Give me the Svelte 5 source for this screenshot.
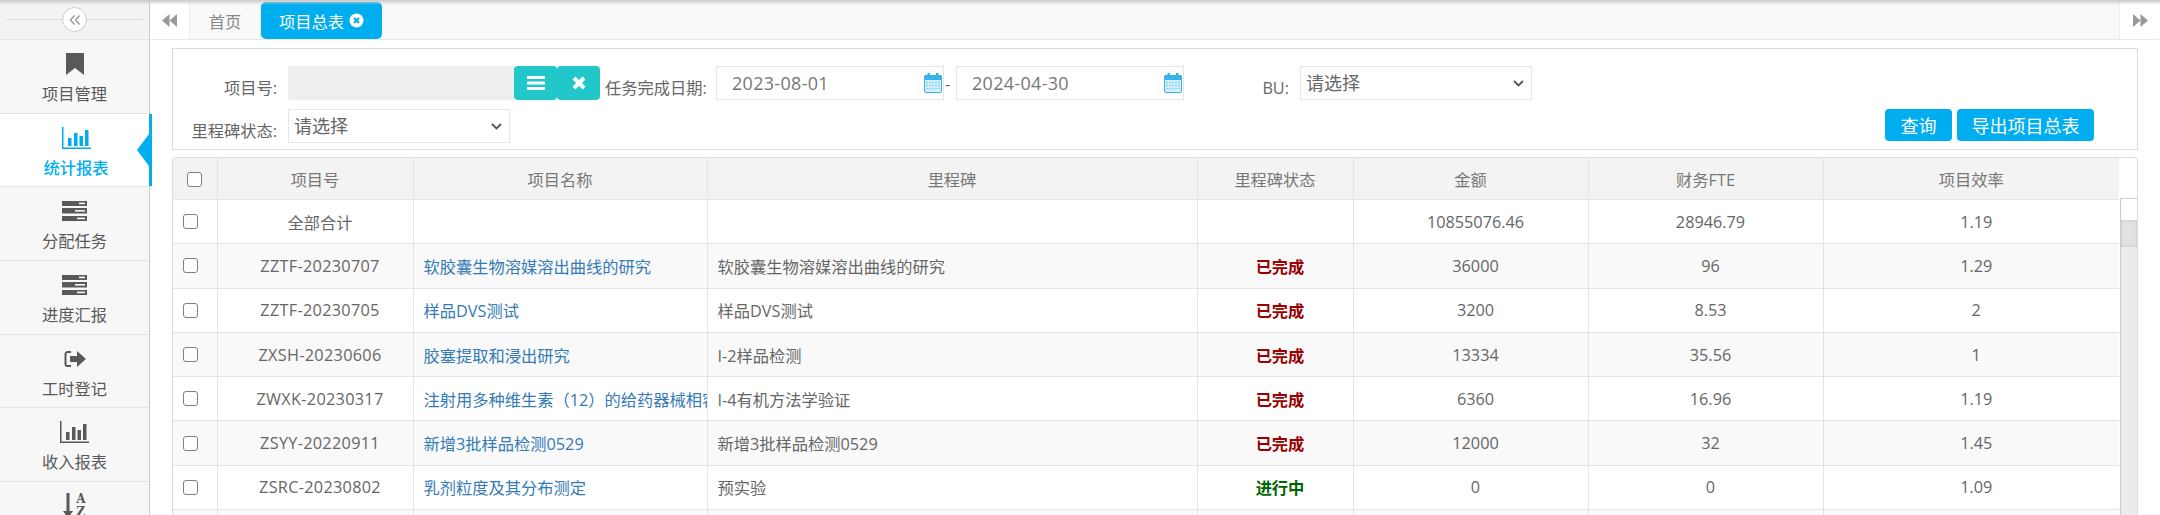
<script>
	const menu = [
		{ label: '项目管理', icon: 'bookmark' },
		{ label: '统计报表', icon: 'chart', active: true },
		{ label: '分配任务', icon: 'tasks' },
		{ label: '进度汇报', icon: 'tasks' },
		{ label: '工时登记', icon: 'signout' },
		{ label: '收入报表', icon: 'chart' },
		{ label: '', icon: 'sort' }
	];

	const columns = ['项目号', '项目名称', '里程碑', '里程碑状态', '金额', '财务FTE', '项目效率'];

	const rows = [
		{ no: '全部合计', name: '', stone: '', status: '', amount: '10855076.46', fte: '28946.79', rate: '1.19' },
		{ no: 'ZZTF-20230707', name: '软胶囊生物溶媒溶出曲线的研究', stone: '软胶囊生物溶媒溶出曲线的研究', status: '已完成', amount: '36000', fte: '96', rate: '1.29' },
		{ no: 'ZZTF-20230705', name: '样品DVS测试', stone: '样品DVS测试', status: '已完成', amount: '3200', fte: '8.53', rate: '2' },
		{ no: 'ZXSH-20230606', name: '胶塞提取和浸出研究', stone: 'I-2样品检测', status: '已完成', amount: '13334', fte: '35.56', rate: '1' },
		{ no: 'ZWXK-20230317', name: '注射用多种维生素（12）的给药器械相容性研究', stone: 'I-4有机方法学验证', status: '已完成', amount: '6360', fte: '16.96', rate: '1.19' },
		{ no: 'ZSYY-20220911', name: '新增3批样品检测0529', stone: '新增3批样品检测0529', status: '已完成', amount: '12000', fte: '32', rate: '1.45' },
		{ no: 'ZSRC-20230802', name: '乳剂粒度及其分布测定', stone: '预实验', status: '进行中', amount: '0', fte: '0', rate: '1.09' },
		{ no: '', name: '', stone: '', status: '', amount: '', fte: '', rate: '' }
	];
</script>

{#snippet calendar()}
	<svg class="cal" width="18" height="20" viewBox="0 0 18 20">
		<rect x="0.5" y="2.5" width="17" height="17" rx="1.5" fill="#d9f0fb" stroke="#35b4ea" />
		<rect x="0" y="2" width="18" height="5" rx="1.5" fill="#35b4ea" />
		<rect x="3.500" y="0" width="2.500" height="4.500" fill="#35b4ea" />
		<rect x="12" y="0" width="2.500" height="4.500" fill="#35b4ea" />
		<path d="M2 9.500h14M2 12.500h14M2 15.500h14" stroke="#8fd3f4" stroke-width="1.500" stroke-dasharray="2 1" />
	</svg>
{/snippet}

{#snippet chevron()}
	<svg class="chev" width="11" height="7" viewBox="0 0 11 7"><path d="M1 1l4.5 4.5L10 1" fill="none" stroke="#555" stroke-width="1.8" /></svg>
{/snippet}

<div class="page">
	<div class="topshadow"></div>
	<aside class="side">
		<div class="collapse">
			<span class="circle">
				<svg width="12" height="12" viewBox="0 0 12 12"><path d="M5.5 1.5L1.5 6l4 4.5M10.5 1.5L6.5 6l4 4.5" fill="none" stroke="#999" stroke-width="1.4" /></svg>
			</span>
		</div>
		{#each menu as item}
			<div class="item" class:active={item.active}>
				<span class="ico">
					{#if item.icon === 'bookmark'}
						<svg width="18" height="22" viewBox="0 0 18 22"><path d="M0 0h18v22l-9-7-9 7z" fill="currentColor" /></svg>
					{:else if item.icon === 'chart'}
						<svg width="29" height="22" viewBox="0 0 29 22" fill="currentColor"><path d="M0 0h1.5v20.5H29V22H0z" /><rect x="6" y="11" width="3.5" height="8" /><rect x="12" y="6" width="3.5" height="13" /><rect x="17.5" y="9" width="3.5" height="10" /><rect x="23" y="3" width="3.5" height="16" /></svg>
					{:else if item.icon === 'tasks'}
						<svg width="25" height="20" viewBox="0 0 25 20" fill="currentColor"><path d="M0 0h25v5H0zM0 7h25v5.5H0zM0 15h25v5H0z" /><rect x="13" y="9" width="10" height="1.6" fill="#f7f7f7" /><rect x="15" y="16.6" width="8" height="1.6" fill="#f7f7f7" /><rect x="17" y="1.6" width="6" height="1.6" fill="#f7f7f7" /></svg>
					{:else if item.icon === 'signout'}
						<svg width="22" height="18" viewBox="0 0 22 18"><path d="M7 2H3.5A2 2 0 0 0 1.500 4v10a2 2 0 0 0 2 2H7" fill="none" stroke="currentColor" stroke-width="2" /><path d="M6 6h7V1l9 8-9 8v-5H6z" fill="currentColor" /></svg>
					{:else}
						<span class="sort">
							<svg width="10" height="25" viewBox="0 0 10 25"><path d="M3.500 0h3v18H10l-5 7-5-7h3.500z" fill="currentColor" /></svg>
							<span class="az"><b>A</b><b>Z</b></span>
						</span>
					{/if}
				</span>
				{#if item.label}<span class="lbl">{item.label}</span>{/if}
				{#if item.active}<span class="arrow"></span>{/if}
			</div>
		{/each}
	</aside>

	<main class="main">
		<nav class="tabs">
			<span class="nav-btn">
				<svg width="15" height="13" viewBox="0 0 15 13"><path d="M7.500 0v13L0 6.500zM15 0v13L7.500 6.500z" fill="#999" /></svg>
			</span>
			<span class="tab">首页</span>
			<span class="tab current">项目总表
				<svg width="15" height="15" viewBox="0 0 15 15"><circle cx="7.500" cy="7.500" r="7" fill="#fff" /><path d="M5 5l5 5M10 5l-5 5" stroke="#00aeef" stroke-width="2" /></svg>
			</span>
			<span class="grow"></span>
			<span class="nav-btn end">
				<svg width="15" height="13" viewBox="0 0 15 13"><path d="M0 0v13l7.500-6.500zM7.500 0v13L15 6.500z" fill="#999" /></svg>
			</span>
		</nav>

		<div class="content">
			<section class="filter">
				<div class="frow">
					<label class="flabel" for="pno">项目号:</label>
					<input id="pno" class="pno" disabled />
					<span class="btns">
						<button class="teal" aria-label="选择">
							<svg width="18" height="14" viewBox="0 0 18 14" fill="#fff"><rect width="18" height="3" rx="0.5" /><rect y="5.500" width="18" height="3" rx="0.5" /><rect y="11" width="18" height="3" rx="0.5" /></svg>
						</button>
						<button class="teal" aria-label="清除">
							<svg width="14" height="14" viewBox="0 0 14 14"><path d="M2 2l10 10M12 2L2 12" stroke="#fff" stroke-width="4" /></svg>
						</button>
					</span>
					<span class="dlabel">任务完成日期:</span>
					<div class="date">2023-08-01{@render calendar()}</div>
					<span class="dash">-</span>
					<div class="date">2024-04-30{@render calendar()}</div>
					<span class="bu">BU:</span>
					<div class="sel">请选择{@render chevron()}</div>
				</div>
				<div class="frow second">
					<span class="flabel">里程碑状态:</span>
					<div class="sel">请选择{@render chevron()}</div>
					<span class="grow"></span>
					<button class="blue query">查询</button>
					<button class="blue export">导出项目总表</button>
				</div>
			</section>

			<section class="grid">
				<div class="tablewrap">
					<table>
						<colgroup>
							<col style="width:44px" />
							<col style="width:196px" />
							<col style="width:294px" />
							<col style="width:490px" />
							<col style="width:156px" />
							<col style="width:235px" />
							<col style="width:235px" />
							<col style="width:296px" />
						</colgroup>
						<thead>
							<tr>
								<th><input type="checkbox" class="chk head" /></th>
								{#each columns as c}<th>{c}</th>{/each}
							</tr>
						</thead>
						<tbody>
							{#each rows as r, i}
								<tr class:odd={i % 2 === 1}>
									<td class="first"><input type="checkbox" class="chk" /></td>
									<td class="c" class:code={i > 0}>{r.no}</td>
									<td class="l"><a href="#top">{r.name}</a></td>
									<td class="l">{r.stone}</td>
									<td class="c status" class:done={r.status === '已完成'} class:doing={r.status === '进行中'}>{r.status}</td>
									<td class="c">{r.amount}</td>
									<td class="c">{r.fte}</td>
									<td class="c">{r.rate}</td>
								</tr>
							{/each}
						</tbody>
					</table>
				</div>
				<div class="scrollbar">
					<div class="sb-up"></div>
					<div class="sb-thumb"></div>
				</div>
			</section>
		</div>
	</main>
</div>

<style>
	:global(body) {
		margin: 0;
		background: #fff;
		overflow: hidden;
	}

	.page {
		position: relative;
		display: flex;
		height: 515px;
		overflow: hidden;
		font-family: 'Open Sans', 'Noto Sans CJK SC', sans-serif;
		font-size: 16.25px;
		color: #666;
	}

	.topshadow {
		position: absolute;
		left: 0;
		right: 0;
		top: 0;
		height: 5px;
		background: linear-gradient(#c8c8c8, rgba(255, 255, 255, 0));
		z-index: 3;
	}

	.grow {
		flex: 1;
	}

	/* side menu */
	.side {
		width: 149px;
		flex: none;
		background: #f7f7f7;
		border-right: 1px solid #ccc;
	}

	.collapse {
		height: 39px;
		display: flex;
		align-items: center;
		justify-content: center;
		background: linear-gradient(90deg, transparent 6px, #ddd 6px, #ddd 143px, transparent 143px) center / 100% 1px no-repeat #f3f3f3;
		border-bottom: 1px solid #e4e4e4;
	}

	.circle {
		width: 23px;
		height: 23px;
		border: 1px solid #ccc;
		border-radius: 50%;
		background: #fff;
		display: flex;
		align-items: center;
		justify-content: center;
	}

	.item {
		position: relative;
		height: 72.7px;
		border-bottom: 1px solid #e4e4e4;
		display: flex;
		flex-direction: column;
		align-items: center;
		color: #595959;
	}

	.ico {
		height: 34px;
		margin-top: 7px;
		display: flex;
		align-items: center;
		justify-content: center;
		flex: none;
	}

	.lbl {
		line-height: 24px;
		margin-top: 1px;
	}

	.item.active {
		background: #fff;
		color: #00aeef;
		font-weight: 500;
		width: 152px;
		box-sizing: content-box;
		z-index: 1;
	}

	.item.active::after {
		content: '';
		position: absolute;
		right: 0;
		top: 0;
		bottom: 0;
		width: 3px;
		background: #00aeef;
	}

	.arrow {
		position: absolute;
		right: 3px;
		top: 20px;
		border: 16px solid transparent;
		border-left: 0;
		border-right: 12px solid #00aeef;
	}

	.sort {
		display: flex;
		gap: 3px;
		color: #595959;
	}

	.az {
		display: flex;
		flex-direction: column;
		font-family: 'DejaVu Serif', serif;
		font-size: 12px;
		line-height: 13px;
	}

	/* tabs */
	.main {
		flex: 1;
		min-width: 0;
		display: flex;
		flex-direction: column;
	}

	.tabs {
		height: 37px;
		flex: none;
		margin-top: 2px;
		margin-bottom: 2px;
		display: flex;
		align-items: stretch;
		background: #f9f9f9;
		box-shadow: 0 2px 0 -1px #e8e8e8;
	}

	.nav-btn {
		width: 39px;
		flex: none;
		background: #fff;
		border-right: 1px solid #eee;
		display: flex;
		align-items: center;
		justify-content: center;
	}

	.nav-btn.end {
		width: 40px;
		border-right: 0;
		border-left: 1px solid #eee;
	}

	.tab {
		width: 70px;
		display: flex;
		align-items: center;
		justify-content: center;
		gap: 5px;
		color: #888;
		border-right: 1px solid #e8e8e8;
	}

	.tab.current {
		width: 121px;
		background: #00aeef;
		color: #fff;
		border-right: 0;
		border-radius: 5px;
	}

	/* filter box */
	.content {
		padding: 7px 22px 0 22px;
		display: flex;
		flex-direction: column;
		gap: 7px;
	}

	.filter {
		height: 102px;
		flex: none;
		box-sizing: border-box;
		border: 1px solid #ddd;
		padding-top: 17px;
		display: flex;
		flex-direction: column;
		gap: 9px;
	}

	.frow {
		display: flex;
		align-items: flex-start;
		height: 34px;
		color: #666;
	}

	.flabel {
		width: 104px;
		text-align: right;
		margin-right: 11px;
		line-height: 24px;
		padding-top: 10px;
		box-sizing: border-box;
		height: 34px;
		flex: none;
		white-space: nowrap;
	}

	.pno {
		width: 226px;
		height: 34px;
		box-sizing: border-box;
		border: 0;
		padding: 0;
		background: #eee;
		border-radius: 2px 0 0 2px;
		flex: none;
	}

	.btns {
		display: flex;
		flex: none;
	}

	button {
		border: 0;
		padding: 0;
		font: inherit;
		cursor: pointer;
	}

	.teal {
		width: 43px;
		height: 34px;
		background: #22c7c9;
		border-radius: 4px;
		display: flex;
		align-items: center;
		justify-content: center;
	}

	.dlabel {
		width: 116px;
		padding-left: 5px;
		box-sizing: border-box;
		line-height: 24px;
		padding-top: 10px;
		white-space: nowrap;
		flex: none;
	}

	.date {
		width: 228px;
		height: 34px;
		box-sizing: border-box;
		border: 1px solid #e6e6e6;
		padding: 0 1px 0 15px;
		font-size: 18px;
		letter-spacing: 0.3px;
		line-height: 32px;
		color: #777;
		display: flex;
		justify-content: space-between;
		align-items: center;
		flex: none;
	}

	.dash {
		width: 12px;
		padding-left: 1px;
		box-sizing: border-box;
		line-height: 24px;
		padding-top: 6px;
		flex: none;
	}

	.bu {
		width: 105px;
		text-align: right;
		padding-right: 11px;
		line-height: 24px;
		padding-top: 10px;
		flex: none;
	}

	.sel {
		width: 232px;
		height: 34px;
		box-sizing: border-box;
		border: 1px solid #e6e6e6;
		padding: 0 7px 0 5px;
		font-size: 18px;
		line-height: 30px;
		color: #666;
		display: flex;
		justify-content: space-between;
		align-items: center;
		flex: none;
	}

	.frow.second .sel {
		width: 222px;
	}

	.blue {
		height: 32px;
		background: #00aeef;
		color: #fff;
		font-size: 18px;
		border-radius: 4px;
		flex: none;
	}

	.query {
		width: 67px;
		margin-right: 5px;
	}

	.export {
		width: 137px;
		margin-right: 43px;
	}

	/* table */
	.grid {
		position: relative;
		display: flex;
		flex: none;
		border: 1px solid #ddd;
		border-radius: 4px 4px 0 0;
		height: 400px;
		overflow: hidden;
	}

	.tablewrap {
		width: 1946px;
		flex: none;
	}

	table {
		width: 1946px;
		table-layout: fixed;
		border-collapse: collapse;
	}

	th {
		height: 41px;
		background: #f3f3f3;
		font-weight: 400;
		color: #777;
		text-align: center;
		border: 1px solid #e4e4e4;
		border-top: 0;
		padding: 0;
	}

	td {
		height: 44.3px;
		box-sizing: border-box;
		border: 1px solid #e4e4e4;
		padding: 0 0 0 10px;
		white-space: nowrap;
		overflow: hidden;
		color: #666;
	}

	.code {
		letter-spacing: 0.3px;
	}

	th:first-child,
	td:first-child {
		border-left: 0;
	}

	th:last-child,
	td:last-child {
		border-right: 0;
	}

	tr.odd td {
		background: #f9f9f9;
	}

	.c {
		text-align: center;
	}

	.l {
		text-align: left;
	}

	a {
		color: #337ab7;
		text-decoration: none;
	}

	.status {
		font-weight: 700;
	}

	.status.done {
		color: #990000;
	}

	.status.doing {
		color: #006400;
	}

	.chk {
		appearance: none;
		width: 15px;
		height: 15px;
		box-sizing: border-box;
		border: 1.5px solid #808080;
		border-radius: 3px;
		background: #fff;
		margin: 0;
		display: block;
	}

	.chk.head {
		margin: 2px 0 0 14px;
	}

	.scrollbar {
		flex: 1;
		display: flex;
		flex-direction: column;
		margin-top: 40px;
		margin-left: 1px;
		background: #ebebeb;
		border: 1px solid #ccc;
		border-width: 1px 0 0 1px;
	}

	.sb-up {
		height: 21px;
		background: #fff;
	}

	.sb-thumb {
		height: 27px;
		background: #e2e2e2;
		box-shadow: inset 0 0 3px #bbb;
	}
</style>
